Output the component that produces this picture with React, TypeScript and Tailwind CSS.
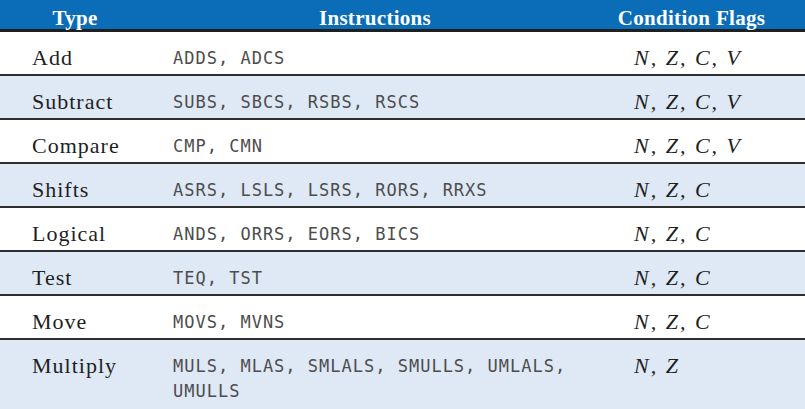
const rows: { type: string; instr: string[]; flags: string; shade: boolean }[] = [
  { type: "Add", instr: ["ADDS, ADCS"], flags: "N, Z, C, V", shade: false },
  { type: "Subtract", instr: ["SUBS, SBCS, RSBS, RSCS"], flags: "N, Z, C, V", shade: true },
  { type: "Compare", instr: ["CMP, CMN"], flags: "N, Z, C, V", shade: false },
  { type: "Shifts", instr: ["ASRS, LSLS, LSRS, RORS, RRXS"], flags: "N, Z, C", shade: true },
  { type: "Logical", instr: ["ANDS, ORRS, EORS, BICS"], flags: "N, Z, C", shade: false },
  { type: "Test", instr: ["TEQ, TST"], flags: "N, Z, C", shade: true },
  { type: "Move", instr: ["MOVS, MVNS"], flags: "N, Z, C", shade: false },
  {
    type: "Multiply",
    instr: ["MULS, MLAS, SMLALS, SMULLS, UMLALS,", "UMULLS"],
    flags: "N, Z",
    shade: true,
  },
];

const serif = "font-['Liberation_Serif','Times_New_Roman',serif]";
const mono = "font-['DejaVu_Sans_Mono','Liberation_Mono',monospace]";

export default function App() {
  return (
    <div className="w-[805px] h-[409px] bg-white overflow-hidden flex flex-col">
      {/* Header */}
      <div
        className={`grid grid-cols-[150px_450px_1fr] h-[32px] shrink-0 bg-[#0b6db7] border-b-[3px] border-[#1f1f1f] text-white font-bold text-[21px] tracking-[0.3px] ${serif}`}
      >
        <div className="flex items-center justify-center pt-[3px]">Type</div>
        <div className="flex items-center justify-center pt-[3px]">Instructions</div>
        <div className="flex items-center justify-center pt-[3px] pr-[22px]">Condition Flags</div>
      </div>

      {/* Body */}
      {rows.map((r, i) => {
        const last = i === rows.length - 1;
        return (
          <div
            key={r.type}
            className={`grid grid-cols-[150px_450px_1fr] items-start ${
              last ? "flex-1" : "h-[44px] shrink-0 border-b-2 border-[#2e2e2e]"
            } ${r.shade ? "bg-[#dfe8f5]" : "bg-white"}`}
          >
            <div className={`pl-[32px] pt-[12px] leading-[28px] text-[22px] tracking-[1px] text-[#1f1f1f] ${serif}`}>
              {r.type}
            </div>
            <div className={`pl-[23px] pt-[14px] leading-[25px] text-[17px] tracking-[1px] text-[#4d4d4d] ${mono}`}>
              {r.instr.map((line) => (
                <div key={line} className="whitespace-pre">
                  {line}
                </div>
              ))}
            </div>
            <div
              className={`pl-[34px] pt-[12px] leading-[28px] text-[22px] italic tracking-[2px] text-[#1f1f1f] ${serif}`}
            >
              {r.flags}
            </div>
          </div>
        );
      })}
    </div>
  );
}
